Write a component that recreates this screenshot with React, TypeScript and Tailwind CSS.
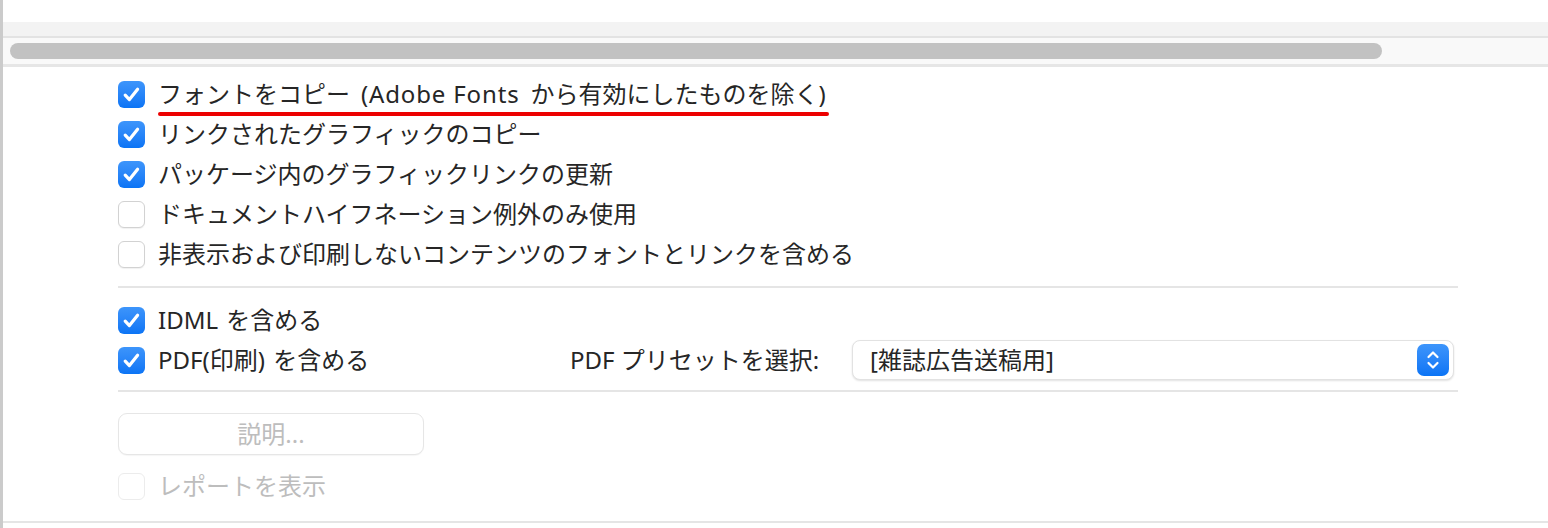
import React from "react";

const font = { fontFamily: '"Noto Sans", "Noto Sans CJK JP", sans-serif' };

function Check({ checked, disabled }: { checked?: boolean; disabled?: boolean }) {
  if (checked) {
    return (
      <div className="w-[27px] h-[27px] rounded-[6px] bg-gradient-to-b from-[#3d95fb] to-[#0a74f5] flex items-center justify-center shrink-0">
        <svg width="19" height="19" viewBox="0 0 19 19" fill="none">
          <path d="M3.2 10.2 L7.4 14.6 L15.6 4.2" stroke="white" strokeWidth="3.2" strokeLinecap="round" strokeLinejoin="round" />
        </svg>
      </div>
    );
  }
  return (
    <div
      className={`w-[27px] h-[27px] rounded-[6px] border shrink-0 bg-white ${
        disabled ? "border-[#ececec]" : "border-[#d2d2d2] shadow-[0_1px_1px_rgba(0,0,0,0.06)]"
      }`}
    />
  );
}

function Row({ checked, label, disabled, underline }: { checked?: boolean; label: React.ReactNode; disabled?: boolean; underline?: boolean }) {
  return (
    <div className="h-[40px] flex items-center gap-[13px]">
      <Check checked={checked} disabled={disabled} />
      <span className={`relative text-[24px] leading-[28px] whitespace-nowrap ${disabled ? "text-[#bdbdbd]" : "text-[#262626]"}`}>
        {label}
        {underline && <span className="absolute left-0 -right-[3px] top-[32px] h-[4px] rounded-full bg-[#ec0000]" />}
      </span>
    </div>
  );
}

export default function App() {
  return (
    <div className="w-[1548px] h-[528px] bg-white border-l-[3px] border-[#cbcbcb] flex flex-col overflow-hidden" style={font}>
      <div className="h-[22px] bg-white shrink-0" />
      <div className="h-[14px] bg-[#f3f3f3] shrink-0" />
      <div className="h-[2px] bg-[#e3e3e3] shrink-0" />
      <div className="h-[26px] bg-[#f9f9f9] shrink-0 flex items-center pl-[7px]">
        <div className="w-[1372px] h-[16px] rounded-full bg-[#c2c2c2]" />
      </div>
      <div className="h-[3px] bg-[#e6e6e6] shrink-0" />
      <div className="flex flex-col pl-[115px] w-[1455px] pt-[7px]">
        <Row
          checked
          underline
          label={
            <>
              フォントをコピー
              <span className="ml-[11px] mr-[11px] tracking-[0.85px]">(Adobe Fonts</span>
              から有効にしたものを除く)
            </>
          }
        />
        <Row checked label="リンクされたグラフィックのコピー" />
        <Row checked label="パッケージ内のグラフィックリンクの更新" />
        <Row label="ドキュメントハイフネーション例外のみ使用" />
        <Row label="非表示および印刷しないコンテンツのフォントとリンクを含める" />
        <div className="h-[2px] bg-[#e5e5e5] mt-[12px] mb-[12px]" />
        <Row checked label={<span className="[word-spacing:2px]">IDML を含める</span>} />
        <div className="flex items-center h-[40px]">
          <div className="w-[452px] shrink-0">
            <Row checked label={<span className="[word-spacing:2px]">PDF(印刷) を含める</span>} />
          </div>
          <span className="text-[24px] leading-[28px] text-[#262626]">PDF プリセットを選択:</span>
          <div className="ml-auto mr-[4px] w-[602px] h-[40px] rounded-[8px] bg-white border border-[#e2e2e2] shadow-[0_1px_2px_rgba(0,0,0,0.12)] flex items-center pl-[17px] pr-[4px]">
            <span className="flex-1 text-[24px] leading-[28px] text-[#262626]">[雑誌広告送稿用]</span>
            <div className="w-[32px] h-[32px] rounded-[7px] bg-gradient-to-b from-[#3d95fb] to-[#0a74f5] flex items-center justify-center">
              <svg width="16" height="22" viewBox="0 0 16 22" fill="none">
                <path d="M3.5 8 L8 3.5 L12.5 8" stroke="white" strokeWidth="2.2" strokeLinecap="round" strokeLinejoin="round" />
                <path d="M3.5 14 L8 18.5 L12.5 14" stroke="white" strokeWidth="2.2" strokeLinecap="round" strokeLinejoin="round" />
              </svg>
            </div>
          </div>
        </div>
        <div className="h-[2px] bg-[#e5e5e5] mt-[10px]" />
        <div className="mt-[21px] w-[306px] h-[42px] rounded-[9px] border border-[#e6e6e6] bg-white shadow-[0_1px_1px_rgba(0,0,0,0.04)] flex items-center justify-center text-[24px] leading-[28px] text-[#bdbdbd]">
          説明...
        </div>
        <div className="mt-[11px]">
          <Row disabled label="レポートを表示" />
        </div>
      </div>
      <div className="mt-auto h-[2px] bg-[#e5e5e5] mb-[5px]" />
    </div>
  );
}
